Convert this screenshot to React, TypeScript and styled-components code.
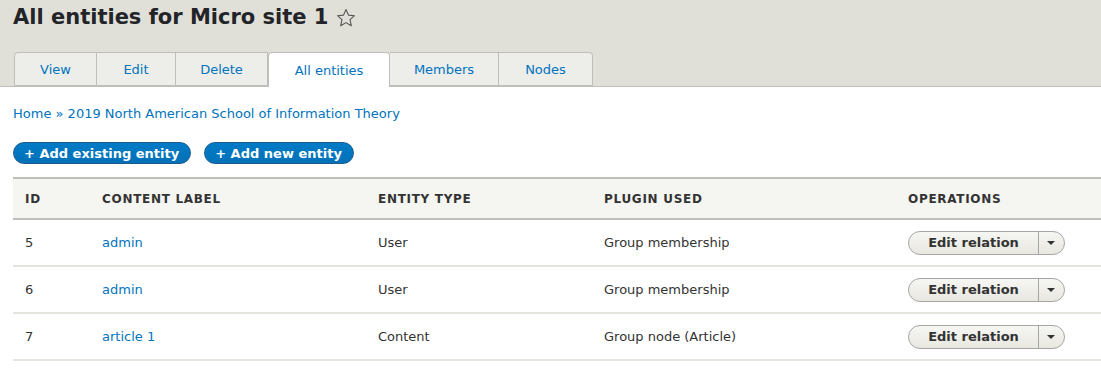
import React from "react";
import styled, { createGlobalStyle } from "styled-components";

import type { FC } from "react";

const GlobalStyle = createGlobalStyle`
  html, body {
    margin: 0;
    padding: 0;
    background: #fff;
    font-family: "DejaVu Sans", Verdana, sans-serif;
    font-size: 13px;
    color: #333;
  }
  * { box-sizing: border-box; }
`;

const Header = styled.div`
  background: #e0e0d8;
  border-bottom: 1px solid #bfbfba;
  padding: 0 0 0 13px;
  height: 87px;
  display: flex;
  flex-direction: column;
`;

const TitleRow = styled.div`
  display: flex;
  align-items: center;
  gap: 8px;
  height: 35px;
`;

const Title = styled.h1`
  margin: 0;
  font-size: 21px;
  font-weight: bold;
  color: #232429;
  line-height: 35px;
`;

const Tabs = styled.ul`
  list-style: none;
  margin: 17px 0 0 1px;
  padding: 0;
  display: flex;
  height: 35px;
`;

const Tab = styled.li<{ $active?: boolean; $width: number }>`
  width: ${(p) => p.$width}px;
  height: ${(p) => (p.$active ? 35 : 34)}px;
  background: ${(p) => (p.$active ? "#fff" : "#ededea")};
  border: 1px solid #bfbfba;
  border-bottom: ${(p) => (p.$active ? "none" : "1px solid #bfbfba")};
  border-left: ${(p) => (p.$active ? "1px solid #bfbfba" : "none")};
  border-radius: ${(p) => (p.$active ? "4px 4px 0 0" : "0")};
  display: flex;
  align-items: center;
  justify-content: center;
  color: #0074bd;
  font-size: 13px;
  &:first-child {
    border-left: 1px solid #bfbfba;
    border-top-left-radius: 4px;
  }
  &:last-child {
    border-top-right-radius: 4px;
  }
`;

const Main = styled.div`
  padding: 0 0 0 13px;
`;

const Breadcrumb = styled.div`
  margin-top: 18px;
  line-height: 18px;
  color: #0074bd;
  font-size: 13px;
`;

const Actions = styled.div`
  display: flex;
  gap: 13px;
  margin-top: 19px;
`;

const PrimaryButton = styled.span`
  display: inline-flex;
  align-items: center;
  height: 22px;
  padding: 0 11px 0 10px;
  border-radius: 12px;
  background: linear-gradient(#007bc6, #0071b8);
  border: 1px solid #1e5c90;
  color: #fff;
  font-weight: bold;
  font-size: 13px;
  white-space: nowrap;
`;

const Table = styled.table`
  margin-top: 13px;
  width: 1088px;
  border-collapse: collapse;
  table-layout: fixed;
`;

const HeadCell = styled.th<{ $width?: number }>`
  text-align: left;
  font-size: 12px;
  font-weight: bold;
  text-transform: uppercase;
  letter-spacing: 0.7px;
  color: #333;
  background: #f5f5f2;
  border-top: 2px solid #bfbfba;
  border-bottom: 2px solid #bfbfba;
  height: 41px;
  padding: 0 0 0 12px;
  width: ${(p) => (p.$width ? `${p.$width}px` : "auto")};
`;

const Row = styled.tr`
  border-bottom: 2px solid #e6e4df;
`;

const Cell = styled.td`
  height: 47px;
  padding: 0 0 0 12px;
  font-size: 13px;
  color: #333;
`;

const LinkText = styled.span`
  color: #0074bd;
`;

const DropButton = styled.div`
  display: inline-flex;
  height: 24px;
  border: 1px solid #a6a6a6;
  border-radius: 12px;
  background: linear-gradient(#f6f6f3, #e8e7e0);
  overflow: hidden;
`;

const DropMain = styled.span`
  display: flex;
  align-items: center;
  justify-content: center;
  width: 129px;
  font-weight: bold;
  font-size: 13px;
  color: #333;
`;

const DropToggle = styled.span`
  display: flex;
  align-items: center;
  justify-content: center;
  width: 26px;
  border-left: 1px solid #a6a6a6;
`;

const Caret = styled.span`
  width: 0;
  height: 0;
  border-left: 4px solid transparent;
  border-right: 4px solid transparent;
  border-top: 4px solid #333;
  margin-right: 2px;
`;

const tabs = [
  { label: "View", width: 83 },
  { label: "Edit", width: 79 },
  { label: "Delete", width: 92 },
  { label: "All entities", width: 122, active: true },
  { label: "Members", width: 109 },
  { label: "Nodes", width: 94 },
];

const rows = [
  { id: "5", label: "admin", type: "User", plugin: "Group membership" },
  { id: "6", label: "admin", type: "User", plugin: "Group membership" },
  { id: "7", label: "article 1", type: "Content", plugin: "Group node (Article)" },
];

const Star: FC = () => (
  <svg width="20" height="20" viewBox="0 0 20 20">
    <path
      d="M10 1.5l2.5 5.6 6 .6-4.5 4 1.3 6-5.3-3.1-5.3 3.1 1.3-6-4.5-4 6-.6z"
      fill="none"
      stroke="#555"
      strokeWidth="1.1"
      strokeLinejoin="round"
    />
  </svg>
);

const App: FC = () => {
  return (
    <>
      <GlobalStyle />
      <Header>
        <TitleRow>
          <Title>All entities for Micro site 1</Title>
          <Star />
        </TitleRow>
        <Tabs>
          {tabs.map((t) => (
            <Tab key={t.label} $active={t.active} $width={t.width}>
              {t.label}
            </Tab>
          ))}
        </Tabs>
      </Header>
      <Main>
        <Breadcrumb>Home » 2019 North American School of Information Theory</Breadcrumb>
        <Actions>
          <PrimaryButton>+ Add existing entity</PrimaryButton>
          <PrimaryButton>+ Add new entity</PrimaryButton>
        </Actions>
        <Table>
          <thead>
            <tr>
              <HeadCell $width={77}>ID</HeadCell>
              <HeadCell $width={276}>Content label</HeadCell>
              <HeadCell $width={226}>Entity type</HeadCell>
              <HeadCell $width={304}>Plugin used</HeadCell>
              <HeadCell>Operations</HeadCell>
            </tr>
          </thead>
          <tbody>
            {rows.map((r) => (
              <Row key={r.id}>
                <Cell>{r.id}</Cell>
                <Cell>
                  <LinkText>{r.label}</LinkText>
                </Cell>
                <Cell>{r.type}</Cell>
                <Cell>{r.plugin}</Cell>
                <Cell>
                  <DropButton>
                    <DropMain>Edit relation</DropMain>
                    <DropToggle>
                      <Caret />
                    </DropToggle>
                  </DropButton>
                </Cell>
              </Row>
            ))}
          </tbody>
        </Table>
      </Main>
    </>
  );
};

export default App;
